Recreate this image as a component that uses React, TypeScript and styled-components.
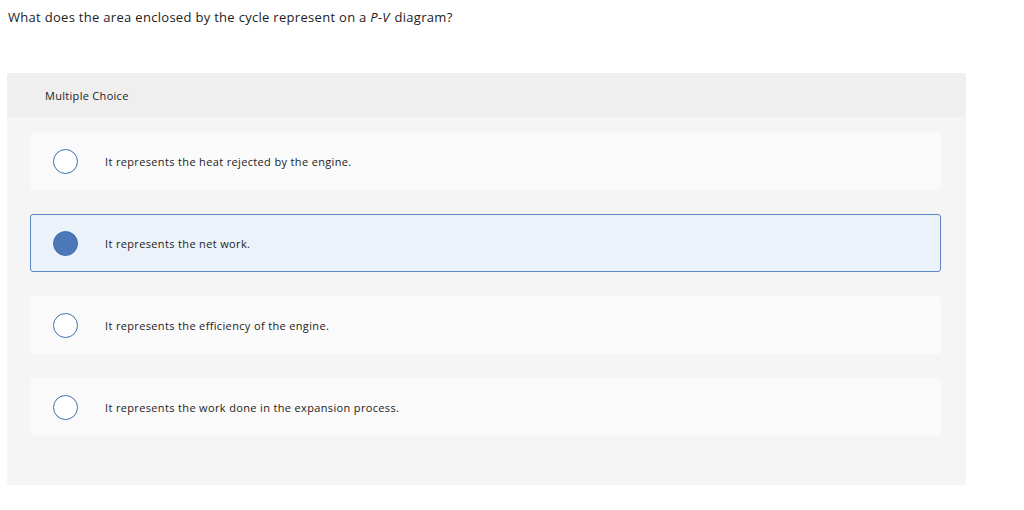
import React, { useState } from 'react';
import styled, { createGlobalStyle } from 'styled-components';

const GlobalStyle = createGlobalStyle`
  html, body {
    margin: 0;
    padding: 0;
    background: #ffffff;
    font-family: "Open Sans", "Liberation Sans", Arial, sans-serif;
    color: #1a1a1a;
  }
`;

const choices = [
  'It represents the heat rejected by the engine.',
  'It represents the net work.',
  'It represents the efficiency of the engine.',
  'It represents the work done in the expansion process.',
];

const QuestionApp: React.FC = () => {
  const [selected, setSelected] = useState<number>(1);

  return (
    <Page>
      <GlobalStyle />
      <Question>
        What does the area enclosed by the cycle represent on a <i>P-V</i> diagram?
      </Question>
      <Panel>
        <PanelHeader>Multiple Choice</PanelHeader>
        <Options>
          {choices.map((text, index) => (
            <Option
              key={index}
              $active={selected === index}
              onClick={() => setSelected(index)}
            >
              <Radio $active={selected === index} />
              <OptionText>{text}</OptionText>
            </Option>
          ))}
        </Options>
      </Panel>
    </Page>
  );
};

const Page = styled.div`
  padding: 9px 58px 0 7px;
`;

const Question = styled.p`
  margin: 0 0 0 1px;
  font-size: 13px;
  line-height: 17px;
  letter-spacing: 0.3px;
  color: #222;

  i {
    font-style: italic;
    margin-right: 1px;
  }
`;

const Panel = styled.div`
  margin-top: 47px;
  background: #f5f5f5;
  border-radius: 3px;
  padding-bottom: 49px;
`;

const PanelHeader = styled.div`
  height: 44px;
  display: flex;
  align-items: center;
  padding-left: 38px;
  background: #efefef;
  border-radius: 3px 3px 0 0;
  font-size: 11px;
  letter-spacing: 0.3px;
  color: #222;
`;

const Options = styled.div`
  display: flex;
  flex-direction: column;
  gap: 24px;
  padding: 15px 25px 0 23px;
`;

const Option = styled.div<{ $active: boolean }>`
  height: 58px;
  box-sizing: border-box;
  display: flex;
  align-items: center;
  padding-left: 22px;
  background: ${(p) => (p.$active ? '#ebf2fa' : '#fafafa')};
  border: 1px solid ${(p) => (p.$active ? '#5b86c4' : '#fafafa')};
  border-radius: 3px;
  cursor: pointer;
`;

const Radio = styled.span<{ $active: boolean }>`
  width: 25px;
  height: 25px;
  box-sizing: border-box;
  border-radius: 50%;
  border: 1px solid #3f6fb0;
  background: ${(p) => (p.$active ? '#4a78b8' : '#ffffff')};
  flex-shrink: 0;
`;

const OptionText = styled.span`
  margin-left: 27px;
  font-size: 11px;
  letter-spacing: 0.35px;
  color: #222;
`;

export default QuestionApp;
